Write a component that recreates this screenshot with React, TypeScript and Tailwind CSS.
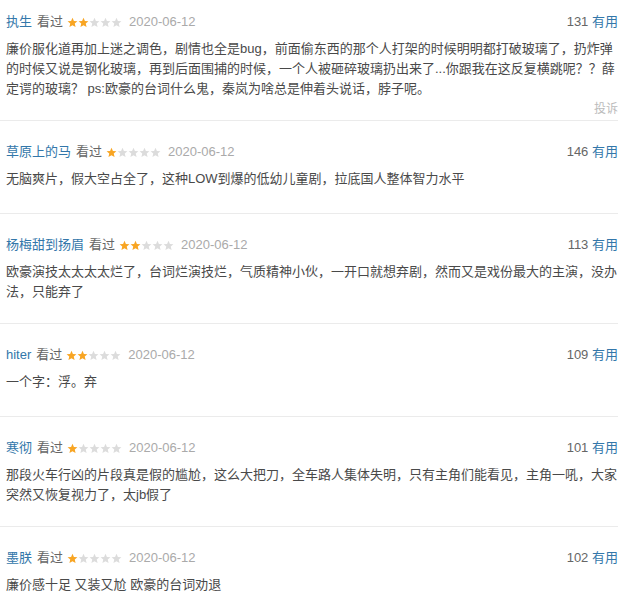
type Review = {
  name: string;
  stars: number;
  votes: number;
  text: string;
};

const reviews: Review[] = [
  {
    name: "执生",
    stars: 2,
    votes: 131,
    text: "廉价服化道再加上迷之调色，剧情也全是bug，前面偷东西的那个人打架的时候明明都打破玻璃了，扔炸弹的时候又说是钢化玻璃，再到后面围捕的时候，一个人被砸碎玻璃扔出来了...你跟我在这反复横跳呢？？薛定谔的玻璃？ ps:欧豪的台词什么鬼，秦岚为啥总是伸着头说话，脖子呢。",
  },
  {
    name: "草原上的马",
    stars: 1,
    votes: 146,
    text: "无脑爽片，假大空占全了，这种LOW到爆的低幼儿童剧，拉底国人整体智力水平",
  },
  {
    name: "杨梅甜到扬眉",
    stars: 2,
    votes: 113,
    text: "欧豪演技太太太太烂了，台词烂演技烂，气质精神小伙，一开口就想弃剧，然而又是戏份最大的主演，没办法，只能弃了",
  },
  { name: "hiter", stars: 2, votes: 109, text: "一个字：浮。弃" },
  {
    name: "寒彻",
    stars: 1,
    votes: 101,
    text: "那段火车行凶的片段真是假的尴尬，这么大把刀，全车路人集体失明，只有主角们能看见，主角一吼，大家突然又恢复视力了，太jb假了",
  },
  { name: "墨朕", stars: 1, votes: 102, text: "廉价感十足 又装又尬 欧豪的台词劝退" },
];

function Star({ on }: { on: boolean }) {
  return (
    <svg width="11" height="11" viewBox="0 0 24 24" className="shrink-0">
      <path
        d="M12 1.5l3.1 7.1 7.6.7-5.8 5.1 1.8 7.5L12 17.9l-6.7 4 1.8-7.5L1.3 9.3l7.6-.7z"
        fill={on ? "#f8a523" : "#dcdcdc"}
      />
    </svg>
  );
}

function Entry({ r, first }: { r: Review; first: boolean }) {
  return (
    <div
      className={
        "w-[618px] border-b border-[#ebebeb] pl-[6px] " +
        (first ? "pt-[13px] pb-[4px]" : "pt-[22px] pb-[7px]")
      }
    >
      <div className="flex items-center h-[18px] text-[13px] leading-[18px]">
        <span className="text-[#37a]">{r.name}</span>
        <span className="ml-[5px] text-[#666]">看过</span>
        <span className="ml-[4px] flex">
          {[0, 1, 2, 3, 4].map((i) => (
            <Star key={i} on={i < r.stars} />
          ))}
        </span>
        <span className="ml-[7px] text-[#aaa]">2020-06-12</span>
        <span className="ml-auto text-[#666]">
          {r.votes} <span className="text-[#37a]">有用</span>
        </span>
      </div>
      <p className="mt-[8px] min-h-[23px] text-[13px] leading-[20px] text-[#494949]">{r.text}</p>
      <div
        className={
          "h-[14px] flex justify-end text-[12px] leading-[14px] text-[#bbb] " +
          (first ? "mt-[3px]" : "")
        }
      >
        {first ? "投诉" : ""}
      </div>
    </div>
  );
}

export default function App(): JSX.Element {
  return (
    <div
      className="w-[638px] h-[606px] overflow-hidden bg-white"
      style={{ fontFamily: '"Liberation Sans", "Noto Sans CJK SC", sans-serif' }}
    >
      {reviews.map((r, i) => (
        <Entry key={i} r={r} first={i === 0} />
      ))}
    </div>
  );
}
